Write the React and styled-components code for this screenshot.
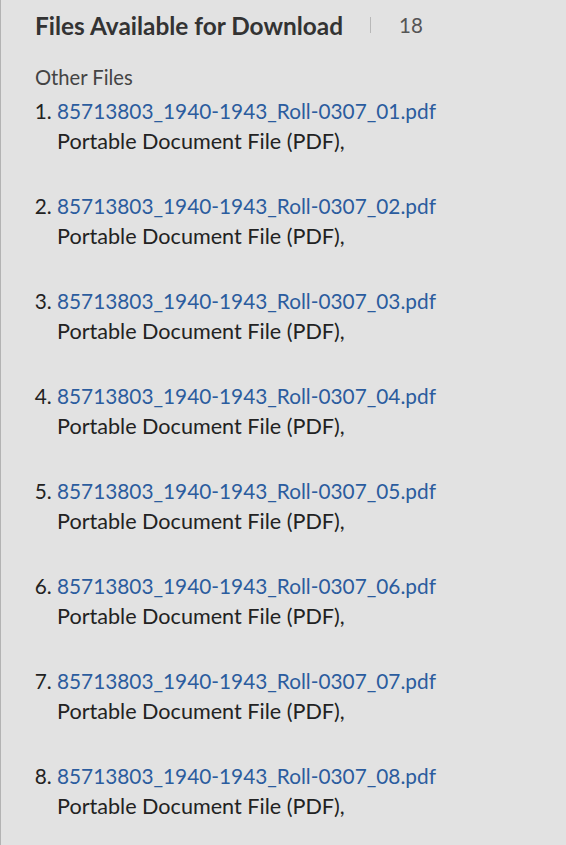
import styled, { createGlobalStyle } from "styled-components";

const GlobalStyle = createGlobalStyle`
  html, body {
    margin: 0;
    padding: 0;
    background: #e2e2e2;
  }
`;

const Panel = styled.div`
  box-sizing: border-box;
  min-height: 845px;
  padding: 10px 20px 0 34px;
  border-left: 1px solid #b3b3b3;
  background: #e2e2e2;
  font-family: Lato, "Liberation Sans", sans-serif;
  color: #222;
`;

const Header = styled.div`
  display: flex;
  align-items: center;
  height: 30px;
`;

const Title = styled.h2`
  margin: 0;
  font-size: 24.4px;
  font-weight: 700;
  color: #333;
`;

const Divider = styled.span`
  width: 1px;
  height: 16px;
  margin: 0 28px 0 27px;
  background: #b8b8b8;
`;

const Count = styled.span`
  font-size: 20.5px;
  color: #555;
`;

const Section = styled.div`
  margin-top: 25px;
  font-size: 20.2px;
  color: #444;
`;

const List = styled.ol`
  margin: 7px 0 0;
  padding: 0 0 0 22px;
  font-size: 20.8px;
  line-height: 30px;
`;

const Item = styled.li`
  margin-bottom: 35px;
  padding-left: 0;
`;

const FileLink = styled.a`
  color: #2b5c9e;
  text-decoration: none;
`;

const FileType = styled.div`
  font-size: 21.6px;
  color: #222;
`;

const files = Array.from(
  { length: 8 },
  (_, i) => `85713803_1940-1943_Roll-0307_0${i + 1}.pdf`
);

export default function App() {
  return (
    <>
      <GlobalStyle />
      <Panel>
        <Header>
          <Title>Files Available for Download</Title>
          <Divider />
          <Count>18</Count>
        </Header>
        <Section>Other Files</Section>
        <List>
          {files.map((f) => (
            <Item key={f}>
              <FileLink href="#">{f}</FileLink>
              <FileType>Portable Document File (PDF),</FileType>
            </Item>
          ))}
        </List>
      </Panel>
    </>
  );
}
